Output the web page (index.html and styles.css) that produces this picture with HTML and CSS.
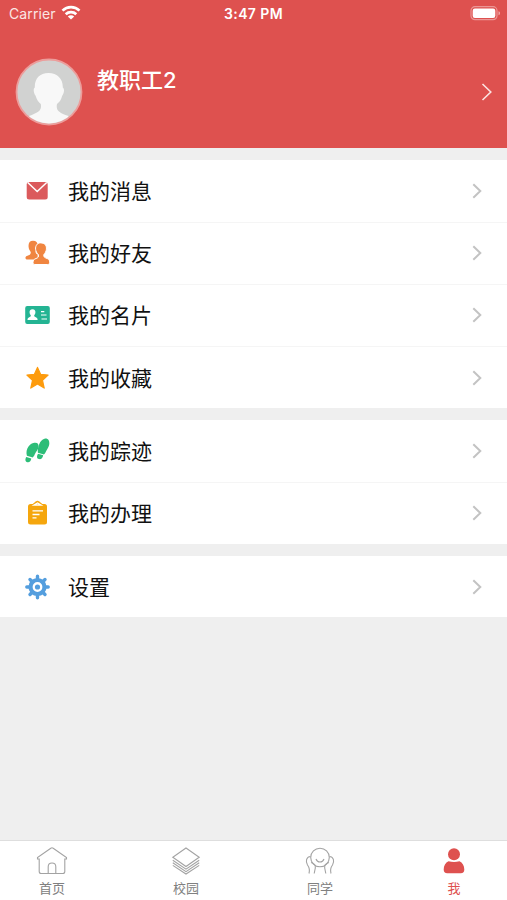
FILE: index.html
```html
<!DOCTYPE html>
<html lang="zh-CN">
<head>
<meta charset="utf-8">
<title>我</title>
<link rel="stylesheet" href="styles.css">
</head>
<body>
<div class="app">
  <header class="header">
    <div class="status">
      <div class="carrier">
        <span>Carrier</span>
        <svg width="20" height="15" viewBox="0 0 20 15" fill="none" stroke="#fff" stroke-width="2.700"><path d="M1.500 5.600c4.800-4.600 12.200-4.600 17 0M4.700 9.200c3-2.800 7.600-2.800 10.600 0"/><path d="m10 14.600-3.200-3.200c1.800-1.600 4.600-1.600 6.400 0z" fill="#fff" stroke="none"/></svg>
      </div>
      <span class="time">3:47 PM</span>
      <svg class="battery" width="31" height="16" viewBox="0 0 31 16"><rect x="1" y="1.700" width="26" height="13" rx="4" fill="none" stroke="#fff" stroke-opacity=".4" stroke-width="1.200"/><rect x="2.700" y="3.500" width="22.600" height="9.400" rx="2.200" fill="#fff"/><path d="M28.500 6.300c2 .5 2 3.400 0 4z" fill="#fff" fill-opacity=".5"/></svg>
    </div>
    <div class="profile">
      <svg class="avatar" width="68" height="68" viewBox="0 0 68 68"><defs><clipPath id="face"><circle cx="34" cy="34" r="31.500"/></clipPath></defs><circle cx="34" cy="34" r="32.500" fill="#d1d2d1" stroke="#ec9d9b" stroke-width="1.800"/><path clip-path="url(#face)" d="M33.500 15c9 0 14.500 6 14.300 14.500 1.700 1 1.700 5-.6 8.300-1.200 4.500-3 6.500-5.200 8.200-1.200 6 1.500 8.500 11.500 12v12H14V58c9.500-3.500 13-5.500 11.800-12-2.300-2-4-4-5.200-8.200-2.200-3.300-2.500-7.300-.8-8.300C19.500 21 24.500 15 33.500 15z" fill="#f8f8f8"/></svg>
      <h1 class="name">教职工2</h1>
      <svg class="more" width="12" height="20" viewBox="0 0 12 20" fill="none" stroke="#fbe3e1" stroke-width="1.600"><path d="m1.500 2 8.300 8-8.300 8"/></svg>
    </div>
  </header>
  <main class="groups">
    <section class="group">
      <div class="row">
        <svg class="icon" viewBox="0 0 26 26"><rect x="2.700" y="4" width="21" height="17.500" rx="2.500" fill="#db5a5c"/><path d="m3.700 4.500 9.500 9 9.500-9" fill="none" stroke="#fff" stroke-width="1.500"/></svg>
        <span class="label">我的消息</span>
        <svg class="chevron" viewBox="0 0 10 16"><path d="m1.300 1.300 7 6.700-7 6.700"/></svg>
      </div>
      <div class="row">
        <svg class="icon" viewBox="0 0 26 26" fill="#f08540"><path d="M9 .8c3.500 0 5.200 2.400 4.700 5.500-.3 2.300-1.500 3.300-2 4.700-.4 2 .3 2.800 2 3.600v5H3.500c-2.400 0-2.500-2.500-1.300-3.300 2.300-1.300 5-1 4.500-4.300-.6-1.500-1.900-2.500-2.100-5C4.200 3.300 5.600.8 9 .8z"/><path stroke="#fff" stroke-width="1" d="M16.500 2.900c4.600 0 6.300 3 5.900 6.300-.2 2.300-1.300 3.900-2.500 5.300-.4 2.500.4 3 3.200 4 2 .7 2.700 1.900 2.500 4-.1 1.600-.8 2-2 2H11c-1.400 0-2-.7-2-2.100 0-2.200 1-3.200 3-3.900 2.300-.8 2.800-1.600 2.300-4-1.400-1.400-2.500-3-2.700-5.300-.3-3.300 1.500-6.300 4.900-6.300z"/></svg>
        <span class="label">我的好友</span>
        <svg class="chevron" viewBox="0 0 10 16"><path d="m1.300 1.300 7 6.700-7 6.700"/></svg>
      </div>
      <div class="row">
        <svg class="icon" viewBox="0 0 26 26"><rect x="1.200" y="4" width="24.600" height="18" rx="2" fill="#24b493"/><path fill="#fff" d="M8.500 7.200c2.200 0 3.100 1.500 2.900 3.500-.1 1.200-.7 1.900-1.200 2.600 0 1.300.3 1.500 1.600 1.900 1.300.4 1.800 1.200 1.800 2.800H3.500c0-1.600.5-2.400 1.800-2.800 1.200-.4 1.600-.6 1.500-1.900-.5-.7-1.100-1.400-1.200-2.600-.2-2 .7-3.500 2.900-3.500z"/><path fill="none" stroke="#fff" stroke-width="1.200" d="M17 9.700h3.300M17 13h5.500M17.500 17H23"/></svg>
        <span class="label">我的名片</span>
        <svg class="chevron" viewBox="0 0 10 16"><path d="m1.300 1.300 7 6.700-7 6.700"/></svg>
      </div>
      <div class="row">
        <svg class="icon" viewBox="0 0 26 26"><path fill="#fd9b0d" stroke="#fd9b0d" stroke-width="1.200" stroke-linejoin="round" d="m13.500 2.400 3.100 6.900 7.500.8-5.600 5.200 1.700 7.800-6.700-4-6.700 4 1.700-7.800-5.600-5.200 7.500-.8z"/></svg>
        <span class="label">我的收藏</span>
        <svg class="chevron" viewBox="0 0 10 16"><path d="m1.300 1.300 7 6.700-7 6.700"/></svg>
      </div>
    </section>
    <section class="group">
      <div class="row">
        <svg class="icon" viewBox="0 0 26 26" fill="#2dbd78"><path d="M10.300 4.800c3.500-.5 4.800 1.700 4.100 4.700-.6 2.600-2.200 3.800-3.200 5.900-.7 1.500-1.200 2.800-2.500 4.100l-5.800-1.700C1.900 14.400 2.700 11 4.500 8.500c1.300-1.800 3.300-3.300 5.800-3.700z"/><path d="m2.300 19 5 1.500c-.3 2.700-1.800 4.200-3.900 3.800-2.300-.5-2.500-3-1.100-5.300zM20.500.7c3.300-.7 5.100 1.600 4.800 5.200-.3 2.900-2 4.900-3.100 7-.7 1.500-1.200 2.500-2.300 3.600l-6-1.700c-.3-2.700.1-6 1.300-8.600C16.300 3.400 18.100 1.200 20.500.7z"/><path d="m14 15.700 5.200 1.500c-.6 3-2.200 4.400-4.300 3.900-2.300-.5-2.300-3-.9-5.400z"/></svg>
        <span class="label">我的踪迹</span>
        <svg class="chevron" viewBox="0 0 10 16"><path d="m1.300 1.300 7 6.700-7 6.700"/></svg>
      </div>
      <div class="row">
        <svg class="icon" viewBox="0 0 26 26"><rect x="4" y="4" width="19" height="20.500" rx="2.500" fill="#f5a60d"/><path fill="#f5a60d" d="m7.500 5 4.200-3.500q1.800-1.400 3.600 0L19.500 5z"/><path fill="none" stroke="#fff" stroke-width="1.300" d="m10 5 3.500-2L17 5zM8.500 10.900h10.500M8.500 14.500h7M8.500 17.900h4"/></svg>
        <span class="label">我的办理</span>
        <svg class="chevron" viewBox="0 0 10 16"><path d="m1.300 1.300 7 6.700-7 6.700"/></svg>
      </div>
    </section>
    <section class="group">
      <div class="row">
        <svg class="icon" viewBox="0 0 26 26" fill="none" stroke="#549ede"><path stroke-width="3.400" stroke-linecap="round" d="M13.500 2.300v3M13.500 20.700v3M2.800 13h3M21.200 13h3M6 5.500l2 2M19 18.500l2 2M6 20.500l2-2M19 7.500l2-2"/><circle cx="13.500" cy="13" r="7" stroke-width="4.200"/><circle cx="13.500" cy="13" r="2.600" fill="#549ede" stroke="none"/></svg>
        <span class="label">设置</span>
        <svg class="chevron" viewBox="0 0 10 16"><path d="m1.300 1.300 7 6.700-7 6.700"/></svg>
      </div>
    </section>
  </main>
  <nav class="tabs">
    <div class="tab">
      <svg viewBox="0 0 32 30"><path d="M3.200 13H1.500v-1.500L14.800 2.200q1.200-.8 2.400 0l13.300 9.300V13h-1.700v12.500q0 2-2 2H5.200q-2 0-2-2zM12.200 27.500v-6.800c0-5 7.600-5 7.600 0v6.800"/></svg>
      <span>首页</span>
    </div>
    <div class="tab">
      <svg viewBox="0 0 32 30"><path d="M16 2 29.200 11.200 16 20.500 2.800 11.200zM2.800 14.200 16 23.200l13.200-9M2.800 16.800 16 25.600l13.200-8.800M2.800 19.400 16 28l13.200-8.600"/></svg>
      <span>校园</span>
    </div>
    <div class="tab">
      <svg viewBox="0 0 32 30"><circle cx="16" cy="11.500" r="9.300"/><path d="M12 13c1.500 4 6.500 4 8 0M6.500 10.500C2 11 1.500 15.500 3.500 19c1.500 2 2.700 4 1.500 8.500M25.500 10.500c4.500.5 5 5 3 8.500-1.500 2-2.700 4-1.500 8.500M7 16.500c3 .8 4.700 3 4.300 5.500l-1.100 5.500M25 16.500c-3 .8-4.700 3-4.300 5.500l1.100 5.500"/></svg>
      <span>同学</span>
    </div>
    <div class="tab tab-active">
      <svg viewBox="0 0 32 30"><circle cx="16" cy="8.200" r="6"/><path d="M10.500 15.300q5.500 1.500 11 0c3 1.200 4.800 4.500 4.800 8.200q0 3.800-3.500 3.800H9.200q-3.500 0-3.500-3.800c0-3.700 1.800-7 4.800-8.200z"/></svg>
      <span>我</span>
    </div>
  </nav>
</div>
</body>
</html>
```

FILE: styles.css
```css
* {
  box-sizing: border-box;
}

body {
  margin: 0;
  font-family: "Liberation Sans", "Noto Sans CJK SC", sans-serif;
  background: #efefef;
  color: #111;
}

svg {
  display: block;
  flex: none;
}

.app {
  display: flex;
  flex-direction: column;
  height: 900px;
}

.header {
  height: 148px;
  background: #de514f;
  color: #fff;
}

.status {
  display: grid;
  grid-template-columns: 1fr auto 1fr;
  align-items: center;
  height: 28px;
  padding: 0 6px 0 9px;
  font-family: Inter, "Liberation Sans", sans-serif;
  font-size: 14px;
  line-height: 28px;
}

.carrier {
  display: flex;
  align-items: center;
  gap: 5px;
  color: #fbe6e4;
  letter-spacing: 0.1px;
}

.carrier svg {
  margin-top: -3px;
}

.time {
  margin-right: 3px;
  font-weight: 600;
  letter-spacing: 0.4px;
}

.battery {
  justify-self: end;
  margin-top: -2px;
}

.profile {
  display: flex;
  align-items: center;
  height: 128px;
  padding: 0 14px 0 15px;
}

.name {
  flex: 1;
  margin: 0 0 24px 14px;
  font-family: Inter, "Noto Sans CJK SC", sans-serif;
  font-size: 22px;
  font-weight: 500;
  line-height: 32px;
}

.groups {
  display: flex;
  flex: 1;
  flex-direction: column;
  gap: 12px;
  padding-top: 12px;
}

.group {
  background: #fff;
}

.row {
  display: flex;
  align-items: center;
  height: 62px;
  padding: 0 25px 0 24px;
}

.row + .row {
  box-shadow: inset 0 1px #f5f5f5;
}

.row:nth-child(4) {
  padding-top: 2px;
}

.group:last-child .row {
  height: 61px;
}

.icon {
  width: 26px;
  height: 26px;
}

.label {
  flex: 1;
  margin: 0 0 1px 18px;
  font-family: "Noto Sans CJK SC", sans-serif;
  font-size: 21px;
  line-height: 29px;
}

.chevron {
  width: 10px;
  height: 16px;
  fill: none;
  stroke: #c3c3c3;
  stroke-width: 2;
}

.tabs {
  display: flex;
  justify-content: space-between;
  height: 60px;
  padding: 5px 33px 0 32px;
  border-top: 1px solid #dedede;
  background: #fff;
}

.tab {
  display: flex;
  flex-direction: column;
  align-items: center;
  width: 40px;
  color: #808080;
  font-family: "Noto Sans CJK SC", sans-serif;
  font-size: 13px;
  line-height: 20px;
}

.tab svg {
  width: 32px;
  height: 30px;
  margin-bottom: 2px;
  fill: none;
  stroke: #a3a3a3;
  stroke-width: 1.1;
}

.tab-active {
  color: #de514f;
}

.tab-active svg {
  fill: #de514f;
  stroke: none;
}
```
